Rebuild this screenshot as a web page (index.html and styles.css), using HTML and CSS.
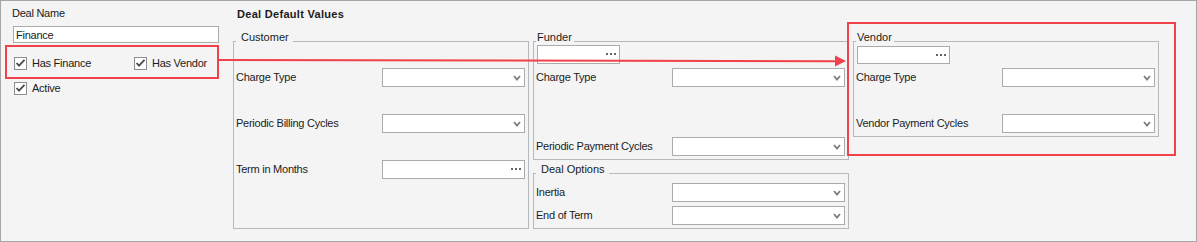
FILE: index.html
```html
<!DOCTYPE html>
<html lang="en">
<head>
    <meta charset="UTF-8">
    <title>Deal Default Values</title>
    <link rel="stylesheet" href="styles.css">
</head>
<body>
    <div class="window">
        <!-- Left column: deal name and flags -->
        <div class="side">
            <div class="caption">Deal Name</div>
            <div class="field name-field">Finance</div>
            <div class="callout flags">
                <div class="check first">
                    <span class="box"><svg width="11" height="11" viewBox="0 0 11 11"><path d="M1.5 5 L4 7.6 L9.5 1.8" /></svg></span>Has Finance
                </div>
                <div class="check">
                    <span class="box"><svg width="11" height="11" viewBox="0 0 11 11"><path d="M1.5 5 L4 7.6 L9.5 1.8" /></svg></span>Has Vendor
                </div>
            </div>
            <div class="check active">
                <span class="box"><svg width="11" height="11" viewBox="0 0 11 11"><path d="M1.5 5 L4 7.6 L9.5 1.8" /></svg></span>Active
            </div>
        </div>

        <!-- Default values -->
        <div class="main">
            <div class="heading">Deal Default Values</div>
            <div class="columns">

                <div class="group customer">
                    <div class="group-title">Customer</div>
                    <div class="rows">
                        <div class="row">
                            <span>Charge Type</span>
                            <div class="combo"><svg width="8" height="6" viewBox="0 0 8 6"><polyline points="1,1 4,4.5 7,1" /></svg></div>
                        </div>
                        <div class="row">
                            <span>Periodic Billing Cycles</span>
                            <div class="combo"><svg width="8" height="6" viewBox="0 0 8 6"><polyline points="1,1 4,4.5 7,1" /></svg></div>
                        </div>
                        <div class="row">
                            <span>Term in Months</span>
                            <div class="dots"><i></i><i></i><i></i></div>
                        </div>
                    </div>
                </div>

                <div class="stack">
                    <div class="group funder">
                        <div class="group-title">Funder</div>
                        <div class="dots picker"><i></i><i></i><i></i></div>
                        <div class="rows">
                            <div class="row">
                                <span>Charge Type</span>
                                <div class="combo"><svg width="8" height="6" viewBox="0 0 8 6"><polyline points="1,1 4,4.5 7,1" /></svg></div>
                            </div>
                            <div class="row">
                                <span>Periodic Payment Cycles</span>
                                <div class="combo"><svg width="8" height="6" viewBox="0 0 8 6"><polyline points="1,1 4,4.5 7,1" /></svg></div>
                            </div>
                        </div>
                    </div>

                    <div class="group options">
                        <div class="group-title">Deal Options</div>
                        <div class="rows">
                            <div class="row">
                                <span>Inertia</span>
                                <div class="combo"><svg width="8" height="6" viewBox="0 0 8 6"><polyline points="1,1 4,4.5 7,1" /></svg></div>
                            </div>
                            <div class="row">
                                <span>End of Term</span>
                                <div class="combo"><svg width="8" height="6" viewBox="0 0 8 6"><polyline points="1,1 4,4.5 7,1" /></svg></div>
                            </div>
                        </div>
                    </div>
                </div>

                <div class="callout vendor-box">
                    <div class="group vendor">
                        <div class="group-title">Vendor</div>
                        <div class="dots picker"><i></i><i></i><i></i></div>
                        <div class="rows">
                            <div class="row">
                                <span>Charge Type</span>
                                <div class="combo"><svg width="8" height="6" viewBox="0 0 8 6"><polyline points="1,1 4,4.5 7,1" /></svg></div>
                            </div>
                            <div class="row">
                                <span>Vendor Payment Cycles</span>
                                <div class="combo"><svg width="8" height="6" viewBox="0 0 8 6"><polyline points="1,1 4,4.5 7,1" /></svg></div>
                            </div>
                        </div>
                    </div>
                </div>

            </div>
        </div>

        <!-- Annotation arrow from the flags to the vendor box -->
        <svg class="arrow" width="1197" height="242" viewBox="0 0 1197 242">
            <line x1="219" y1="60" x2="837" y2="61.2" />
            <polygon points="835,55.5 846,61 835,66.5" />
        </svg>
    </div>
</body>
</html>
```

FILE: styles.css
```css
body {
    margin: 0;
    font-family: "Liberation Sans", Arial, sans-serif;
    font-size: 11px;
    color: #1b1b1b;
}

/* Outer form frame */
.window {
    position: relative;
    display: flex;
    width: 1197px;
    height: 242px;
    box-sizing: border-box;
    border: 1px solid #a6a6a6;
    background: #f4f4f4;
    overflow: hidden;
}

/* Left column */
.side {
    flex: 0 0 228px;
    box-sizing: border-box;
    padding: 6px 0 0 4px;
}

.caption {
    line-height: 13px;
    padding-left: 7px;
    letter-spacing: -0.25px;
}

.name-field {
    box-sizing: border-box;
    width: 206px;
    height: 17px;
    margin: 6px 0 0 8px;
    padding: 1px 0 0 2px;
    line-height: 15px;
    border: 1px solid #ababab;
    background: #fff;
    letter-spacing: -0.25px;
}

/* Red highlight boxes */
.callout {
    box-sizing: border-box;
    border: 2px solid #f0424a;
}

.flags {
    display: flex;
    width: 214px;
    height: 34px;
    margin-top: 2px;
    padding: 10px 0 0 7px;
}

.check {
    display: flex;
    align-items: flex-start;
    height: 13px;
    line-height: 13px;
    letter-spacing: -0.25px;
}

.check .box {
    box-sizing: border-box;
    width: 13px;
    height: 13px;
    margin-right: 5px;
    border: 1px solid #8e8e8e;
    background: #fff;
}

.check .box svg {
    display: block;
}

.check .box path {
    fill: none;
    stroke: #4a4a4a;
    stroke-width: 1.8;
}

.flags .first {
    width: 120px;
}

.active {
    margin: 3px 0 0 9px;
}

/* Right area */
.main {
    flex: 1;
    padding-top: 7px;
}

.heading {
    font-weight: bold;
    line-height: 13px;
    padding-left: 8px;
    letter-spacing: 0.3px;
}

.columns {
    display: flex;
    align-items: flex-start;
    margin-top: 1px;
}

/* Group boxes */
.group {
    box-sizing: border-box;
    border: 1px solid #b4b8bf;
}

.group-title {
    width: fit-content;
    margin: -12px 0 0 2px;
    padding: 0 2px 0 1px;
    line-height: 14px;
    background: #f4f4f4;
}

.customer .group-title,
.options .group-title {
    padding: 0 4px 0 5px;
}

.rows {
    display: flex;
    flex-direction: column;
    gap: 27px;
    padding: 0 3px 0 2px;
}

.row {
    display: flex;
    align-items: center;
    justify-content: space-between;
    height: 19px;
    line-height: 13px;
    letter-spacing: -0.25px;
}

/* Dropdowns and picker fields */
.combo,
.dots {
    box-sizing: border-box;
    height: 19px;
    border: 1px solid #ababab;
    background: #fff;
    display: flex;
    justify-content: flex-end;
    align-items: flex-start;
}

.combo {
    padding: 6px 3px 0 0;
}

.combo svg {
    display: block;
}

.combo polyline {
    fill: none;
    stroke: #7c7c7c;
    stroke-width: 1.8;
}

.dots {
    gap: 2px;
    padding: 7px 3px 0 0;
}

.dots i {
    width: 2px;
    height: 2px;
    background: #666;
}

.customer {
    width: 296px;
    height: 188px;
    margin: 19px 0 0 4px;
}

.customer .rows {
    padding-top: 24px;
}

.customer .combo,
.customer .dots {
    width: 143px;
}

.stack {
    width: 316px;
    margin: 19px 0 0 4px;
}

.funder {
    height: 119px;
}

.funder .picker {
    width: 83px;
    margin: 1px 0 0 3px;
}

.funder .rows {
    padding-top: 4px;
    gap: 50px;
}

.funder .combo,
.options .combo {
    width: 173px;
}

.options {
    height: 56px;
    margin-top: 13px;
}

.options .rows {
    padding-top: 7px;
    gap: 4px;
}

.vendor-box {
    width: 329px;
    height: 134px;
    margin-left: -2px;
    padding: 17px 0 0 4px;
}

.vendor {
    width: 306px;
    height: 96px;
}

.vendor .picker {
    width: 93px;
    height: 18px;
    margin: 2px 0 0 3px;
}

.vendor .rows {
    padding-top: 4px;
}

.vendor .combo {
    width: 153px;
}

/* Annotation arrow */
.arrow {
    position: absolute;
    top: -1px;
    left: -1px;
    pointer-events: none;
}

.arrow line {
    stroke: #f0424a;
    stroke-width: 2;
}

.arrow polygon {
    fill: #f0424a;
}
```
